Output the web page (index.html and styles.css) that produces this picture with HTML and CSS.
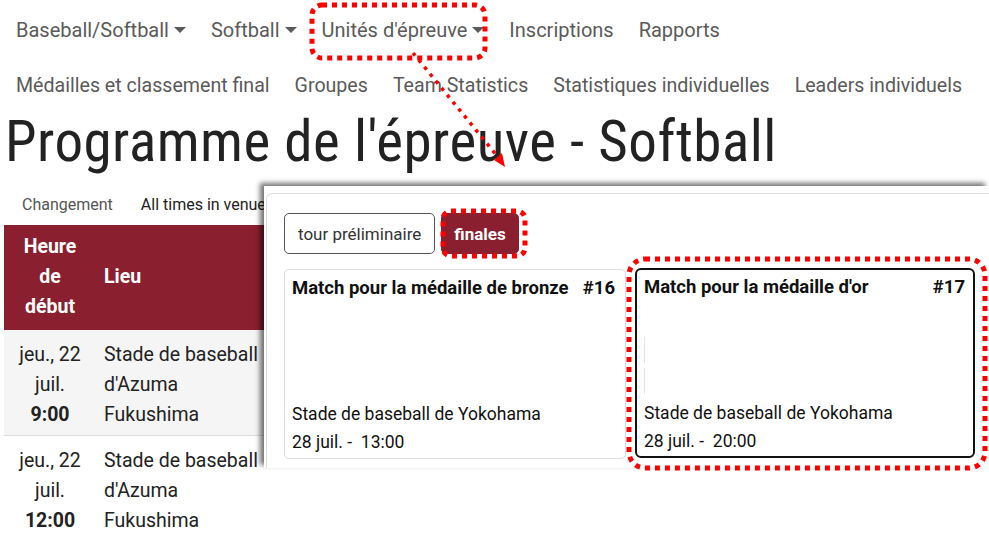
FILE: index.html
```html
<!DOCTYPE html>
<html lang="fr">
<head>
    <meta charset="UTF-8">
    <title>Programme de l'épreuve - Softball</title>
    <link rel="stylesheet" href="styles.css">
</head>
<body>
<div class="page">
    <ul class="navRow">
        <li class="navItem dropdown">Baseball/Softball</li>
        <li class="navItem dropdown">Softball</li>
        <li class="navItem dropdown">Unités d'épreuve</li>
        <li class="navItem">Inscriptions</li>
        <li class="navItem">Rapports</li>
    </ul>
    <ul class="navRow second">
        <li class="navItem">Médailles et classement final</li>
        <li class="navItem">Groupes</li>
        <li class="navItem">Team Statistics</li>
        <li class="navItem">Statistiques individuelles</li>
        <li class="navItem">Leaders individuels</li>
    </ul>
    <h1 class="title">Programme de l'épreuve - Softball</h1>
    <div class="subBar">
        <span class="subLink">Changement</span>
        <span class="subNote">All times in venue time</span>
    </div>
    <table class="schedule">
        <tr>
            <th class="colTime">Heure de début</th>
            <th class="colVenue">Lieu</th>
        </tr>
        <tr class="odd">
            <td class="colTime">jeu., 22 juil.<br><b>9:00</b></td>
            <td class="colVenue">Stade de baseball<br>d'Azuma<br>Fukushima</td>
        </tr>
        <tr>
            <td class="colTime">jeu., 22 juil.<br><b>12:00</b></td>
            <td class="colVenue">Stade de baseball<br>d'Azuma<br>Fukushima</td>
        </tr>
    </table>
</div>

<!-- capture agrandie de la liste des unités -->
<div class="popup">
    <div class="panel">
        <div class="phaseTabs">
            <span class="phaseBtn">tour préliminaire</span>
            <span class="phaseBtn active">finales</span>
        </div>
        <div class="cards">
            <div class="card">
                <div class="cardHead"><span>Match pour la médaille de bronze</span><span>#16</span></div>
                <div class="cardBody"></div>
                <div class="cardFoot">Stade de baseball de Yokohama<br>28 juil. -&nbsp; 13:00</div>
            </div>
            <div class="card picked">
                <div class="cardHead"><span>Match pour la médaille d'or</span><span>#17</span></div>
                <div class="cardBody"><i class="slot"></i><i class="slot"></i></div>
                <div class="cardFoot">Stade de baseball de Yokohama<br>28 juil. -&nbsp; 20:00</div>
            </div>
        </div>
    </div>
</div>

<svg class="marks" width="989" height="536" viewBox="0 0 989 536">
    <g fill="none" stroke="#f00" stroke-width="5" stroke-dasharray="5 5">
        <rect x="312" y="5" width="173" height="53" rx="10"/>
        <rect x="443" y="211" width="82" height="45" rx="8"/>
        <rect x="629" y="259" width="356" height="209" rx="16"/>
    </g>
    <line x1="413" y1="53" x2="498" y2="157" stroke="#f00" stroke-width="3.5" stroke-dasharray="3.5 5.5"/>
    <polygon points="505,167 494,160 502,153" fill="#f00"/>
</svg>
</body>
</html>
```

FILE: styles.css
```css
*{ padding: 0; margin: 0; box-sizing: border-box;}
body{ font-family: Roboto, "DejaVu Sans Condensed", sans-serif; background: #fff; color: #222; width: 989px; height: 536px; overflow: hidden; position: relative;}
.page{ padding: 0 0 0 4px;}
ul.navRow{ list-style: none; display: flex; gap: 25px; padding-left: 12px; height: 60px; align-items: center; font-size: 20px; color: #5a5a5a; white-space: nowrap;}
ul.navRow.second{ height: 50px; font-size: 19.6px;}
li.dropdown::after{ content: ""; display: inline-block; margin-left: 5px; vertical-align: 4px; border-left: 6px solid transparent; border-right: 6px solid transparent; border-top: 6px solid #5a5a5a;}
h1.title{ font-weight: normal; font-size: 57px; font-stretch: 75%; letter-spacing: 0.5px; line-height: 64px; color: #222; padding-left: 1px; white-space: nowrap;}
.subBar{ display: flex; gap: 28px; padding-left: 18px; height: 41px; align-items: center; font-size: 16px; margin-top: 10px;}
.subLink{ color: #555;}
.subNote{ color: #222;}
table.schedule{ border-collapse: collapse; width: 980px; font-size: 19.5px; line-height: 30px;}
table.schedule th{ background: #8a1f2f; color: #fff; font-weight: bold; padding: 7px 8px 8px; vertical-align: middle;}
table.schedule th.colTime{ padding: 7px 10px 8px;}
table.schedule td{ padding: 10px 8px 5px; vertical-align: top; color: #222;}
table.schedule tr.odd td{ background: #f5f5f5; border-bottom: 1px solid #dcdcdc;}
.colTime{ width: 92px; text-align: center;}
.colVenue{ text-align: left;}
.popup{ position: absolute; left: 264px; top: 186px; width: 725px; height: 282px; background: #fff; box-shadow: -4px -3px 5px rgba(0,0,0,0.55); overflow: hidden;}
.panel{ margin: 7px 0 0 2px; height: 300px; border: 1px solid #ddd; border-radius: 6px 0 0 0; border-right: none; padding: 19px 0 0 17px;}
.phaseTabs{ display: flex; gap: 6px; height: 41px;}
.phaseBtn{ display: flex; align-items: center; padding: 0 13px; border: 1px solid #555; border-radius: 5px; font-size: 17px; color: #333;}
.phaseBtn.active{ background: #8a1f2f; border-color: #8a1f2f; color: #fff; font-weight: bold; padding: 0 12px;}
.cards{ display: flex; gap: 9px; margin-top: 15px;}
.card{ width: 342px; height: 190px; border: 1px solid #ddd; border-radius: 5px; display: flex; flex-direction: column; padding: 6px 10px 2px 7px;}
.card.picked{ width: 340px; border: 2px solid #111; border-radius: 6px; margin-top: -1px; padding: 5px 8px 1px 7px;}
.cardHead{ display: flex; justify-content: space-between; font-weight: bold; font-size: 18.5px; color: #111; line-height: 24px; white-space: nowrap;}
.cardBody{ flex: 1; display: flex; flex-direction: column; padding-top: 38px; gap: 5px;}
.slot{ display: block; width: 1px; height: 26px; border-left: 1px solid #e4e4e4;}
.cardFoot{ font-size: 17.5px; line-height: 28px; color: #111;}
.marks{ position: absolute; left: 0; top: 0; pointer-events: none;}
```
